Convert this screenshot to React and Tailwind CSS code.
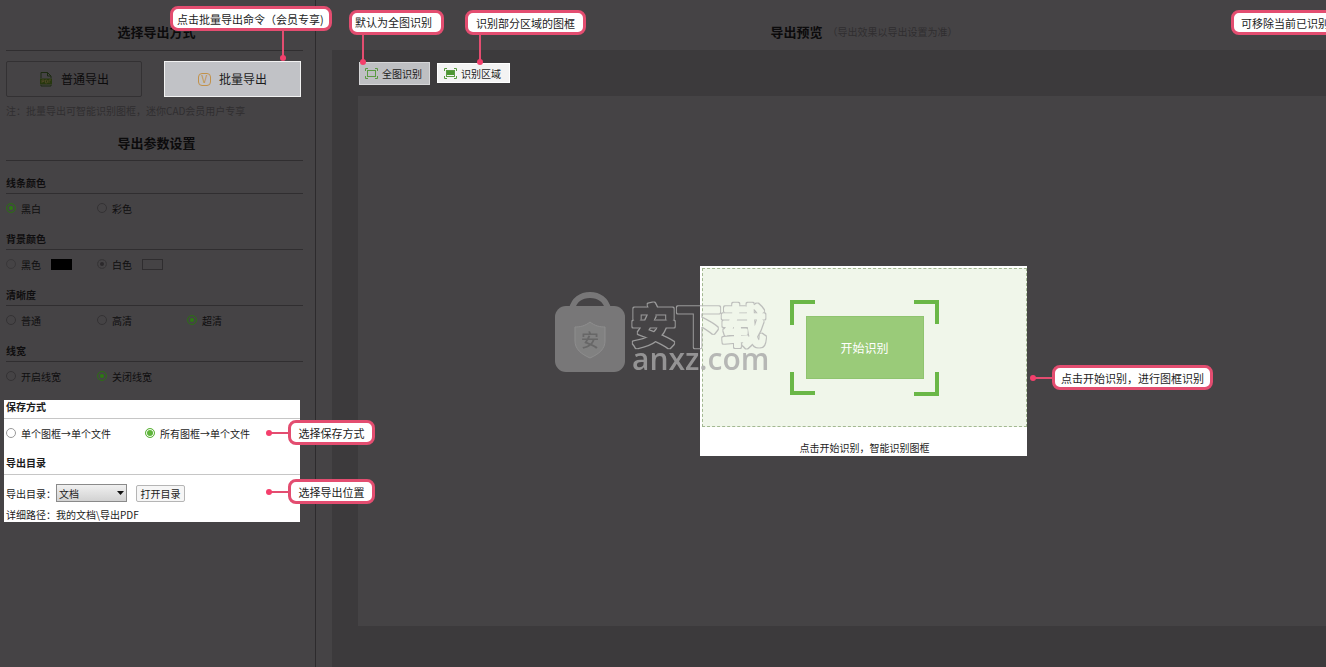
import React, { useState } from "react";
import clsx from "clsx";

const SETTINGS = [
  {
    name: "lineColor",
    title: "线条颜色",
    value: "黑白",
    options: [{ label: "黑白" }, { label: "彩色" }],
  },
  {
    name: "background",
    title: "背景颜色",
    value: "白色",
    muted: true,
    options: [
      { label: "黑色", swatch: "bg-black border-black" },
      { label: "白色", swatch: "border-[#2f2d2f]" },
    ],
  },
  {
    name: "quality",
    title: "清晰度",
    value: "超清",
    options: [{ label: "普通" }, { label: "高清" }, { label: "超清" }],
  },
  {
    name: "lineWidth",
    title: "线宽",
    value: "关闭线宽",
    options: [{ label: "开启线宽" }, { label: "关闭线宽" }],
  },
];

const Radio = ({ name, label, checked, onChange, tone, swatch }) => (
  <label className="flex items-center whitespace-nowrap">
    <input
      type="radio"
      name={name}
      checked={checked}
      onChange={onChange}
      className={clsx(
        "appearance-none w-[10px] h-[10px] rounded-full border mr-[5px]",
        tone === "light" &&
          "border-[#9a9a9a] checked:border-[#5fb53c] checked:bg-[#5fb53c] checked:shadow-[inset_0_0_0_1px_white]",
        tone === "dark" &&
          "border-[#343234] checked:border-[#2f6a1a] checked:bg-[#2d7a12] checked:shadow-[inset_0_0_0_2px_#454345]",
        tone === "muted" &&
          "border-[#393739] checked:bg-[#2b292b] checked:shadow-[inset_0_0_0_2px_#454345]"
      )}
    />
    {label}
    {swatch && (
      <span className={clsx("ml-[10px] w-[21px] h-[11px] border", swatch)} />
    )}
  </label>
);

// Bubble with a line and a dot that points at a control
const Callout = ({ children, className, pointer = "left", stem = "" }) => (
  <div
    className={clsx(
      "absolute z-10 h-[25px] flex items-center rounded-lg border-[3px] border-[#e34d70] bg-white text-[11px] leading-4 text-[#1c1c1c] whitespace-nowrap",
      className
    )}
  >
    {children}
    {pointer === "down" && (
      <span className={clsx("absolute top-full w-[2px] bg-[#e34d70]", stem)}>
        <span className="absolute -bottom-[3px] -left-[2px] w-[6px] h-[6px] rounded-full bg-[#f43f6c]" />
      </span>
    )}
    {pointer === "left" && (
      <span className="absolute right-full top-[9px] w-[22px] h-[2px] bg-[#e34d70]">
        <span className="absolute -top-[2px] -left-[3px] w-[6px] h-[6px] rounded-full bg-[#f43f6c]" />
      </span>
    )}
  </div>
);

const FileIcon = () => (
  <svg width="14" height="16" viewBox="0 0 14 16" fill="none">
    <path d="M2 7V1.500h6.500L12 5v2" stroke="#1d2b12" />
    <path d="M8.500 1.500V5H12" stroke="#1d2b12" />
    <path d="M1 7.500h12v6H1z" fill="#27370f" />
    <path d="M3 12V9h2v1.500H3M6.500 9v3H8l.5-1V9.500L8 9zM10 12V9h2" stroke="#4b4724" />
    <path d="M2 14v1h10v-1" stroke="#1d2b12" />
  </svg>
);

const ScanIcon = ({ filled }) => (
  <svg width="13" height="11" viewBox="0 0 13 11" fill="none" stroke="#5b9b42">
    <path d="M.5 3V.5H3M10 .5h2.500V3M12.500 8v2.500H10M3 10.500H.5V8" />
    <rect x="2.500" y="2.500" width="8" height="6" />
    {filled && <path d="M3 3h7v4H3z" fill="#4c9632" stroke="none" />}
  </svg>
);

const Corners = () => (
  <svg
    className="col-start-1 row-start-1"
    width="149"
    height="96"
    viewBox="0 0 149 96"
    fill="none"
    stroke="#6ab747"
    strokeWidth="4"
  >
    <path d="M2 25V2H25M124 2H147V24M147 72V94H124M25 93H2V72" />
  </svg>
);

const Watermark = () => (
  <div className="absolute right-[256px] top-[25px] flex pointer-events-none opacity-80">
    <svg width="72" height="92" viewBox="0 0 72 92">
      <path
        d="M18 18C20 9 27 4 36 4s16 5 18 14"
        fill="none"
        stroke="#858585"
        strokeWidth="6"
      />
      <rect x="1" y="15" width="70" height="66" rx="11" fill="#858585" />
      <path
        d="M36 31c5 4 10 5 15 5v14c0 8-6 13-15 17-9-4-15-9-15-17V36c5 0 10-1 15-5z"
        fill="#919191"
        stroke="#a0a0a0"
      />
      <text
        x="36"
        y="56"
        textAnchor="middle"
        fontSize="18"
        fontWeight="500"
        fill="#707070"
        fontFamily="Noto Sans CJK SC, sans-serif"
      >
        安
      </text>
    </svg>
    <svg width="145" height="92" viewBox="0 0 145 92">
      <filter id="outline">
        <feMorphology in="SourceAlpha" operator="dilate" radius="1" result="thick" />
        <feFlood floodColor="#b0b0b0" />
        <feComposite in2="thick" operator="in" />
        <feComposite in2="SourceAlpha" operator="out" />
      </filter>
      <text
        x="5"
        y="52"
        fontFamily="Noto Sans CJK SC, sans-serif"
        fontWeight="500"
        fontSize="45"
        stroke="black"
        strokeWidth="3"
        strokeLinejoin="round"
        filter="url(#outline)"
      >
        安下载
      </text>
      <text
        x="6"
        y="79"
        fontFamily="Open Sans, sans-serif"
        fontWeight="600"
        fontSize="30"
        fill="#a8a8a8"
      >
        anxz.com
      </text>
    </svg>
  </div>
);

const Sidebar = () => {
  const [values, setValues] = useState(
    Object.fromEntries(SETTINGS.map((s) => [s.name, s.value]))
  );
  const [saveMode, setSaveMode] = useState("all");

  return (
    <aside className="w-[316px] shrink-0 border-r border-[#2d2b2d] pl-[4px] pr-[12px]">
      <h2 className="ml-[2px] h-[51px] pt-[13px] pl-[4px] text-center text-[13px] leading-[38px] font-bold text-[#0c0b0c] border-b border-[#302e30]">
        选择导出方式
      </h2>

      <div className="relative flex justify-between pt-[10px] pl-[2px] pr-[2px]">
        <button className="w-[136px] h-[36px] flex items-center justify-center gap-[8px] border border-[#333133] rounded-xs text-[12px] text-[#0c0b0c]">
          <FileIcon />
          普通导出
        </button>
        <button className="w-[137px] h-[36px] flex items-center justify-center gap-[8px] border border-[#f2f2f2] bg-[#c1c2c6] text-[12px] text-[#1c1c1c]">
          <span className="w-[13px] h-[13px] flex items-center justify-center rounded border border-[#c2914a] text-[10px] leading-none text-[#c2914a]">
            V
          </span>
          批量导出
        </button>
        <Callout
          pointer="down"
          stem="h-[30px] right-[45px]"
          className="-right-[29px] -top-[45px] w-[162px] pl-[4px]"
        >
          点击批量导出命令（会员专享)
        </Callout>
      </div>

      <p className="h-[29px] pl-[2px] text-[10px] leading-[28px] text-[#302e30]">
        注：批量导出可智能识别图框，迷你CAD会员用户专享
      </p>

      <h2 className="ml-[2px] h-[35px] pl-[4px] text-center text-[13px] leading-[34px] font-bold text-[#0c0b0c] border-b border-[#302e30]">
        导出参数设置
      </h2>

      <div className="pt-[13px] pl-[2px] text-[10px] text-[#0f0e0f]">
        {SETTINGS.map((setting) => (
          <fieldset key={setting.name} className="h-[56px]">
            <legend className="w-full h-[20px] leading-[18px] font-bold border-b border-[#302e30]">
              {setting.title}
            </legend>
            <div className="grid grid-cols-[91px_90px_1fr] h-[28px]">
              {setting.options.map((option) => (
                <Radio
                  key={option.label}
                  name={setting.name}
                  label={option.label}
                  swatch={option.swatch}
                  tone={setting.muted ? "muted" : "dark"}
                  checked={values[setting.name] === option.label}
                  onChange={() =>
                    setValues({ ...values, [setting.name]: option.label })
                  }
                />
              ))}
            </div>
          </fieldset>
        ))}
      </div>

      <div className="relative mt-[2px] w-[296px] h-[122px] bg-white text-[10px] text-[#1c1c1c]">
        <fieldset className="h-[54px]">
          <legend className="w-full h-[19px] pl-[2px] leading-[13px] font-bold border-b border-[#c6c6c6]">
            保存方式
          </legend>
          <div className="grid grid-cols-[139px_1fr] h-[28px] pl-[2px]">
            <Radio
              name="saveMode"
              label="单个图框→单个文件"
              tone="light"
              checked={saveMode === "single"}
              onChange={() => setSaveMode("single")}
            />
            <Radio
              name="saveMode"
              label="所有图框→单个文件"
              tone="light"
              checked={saveMode === "all"}
              onChange={() => setSaveMode("all")}
            />
          </div>
        </fieldset>
        <h3 className="h-[21px] pl-[2px] leading-[18px] font-bold border-b border-[#c6c6c6]">
          导出目录
        </h3>
        <div className="flex items-center h-[36px] pl-[2px]">
          <label htmlFor="folder" className="w-[50px] whitespace-nowrap">
            导出目录：
          </label>
          <div className="relative">
            <select
              id="folder"
              className="appearance-none block w-[71px] h-[18px] pl-[2px] border border-[#8a8a8a] bg-linear-to-b from-[#f0f0f0] to-[#d2d2d2]"
            >
              <option>文档</option>
            </select>
            <svg
              className="absolute right-[3px] top-[7px] pointer-events-none"
              width="7"
              height="4"
              viewBox="0 0 7 4"
            >
              <path d="M0 0h7L3.500 4z" fill="#111" />
            </svg>
          </div>
          <button className="ml-[9px] w-[49px] h-[17px] border border-[#b5b5b5] rounded-xs bg-[#f6f6f6]">
            打开目录
          </button>
        </div>
        <p className="pl-[2px] leading-[8px]">详细路径：我的文档\导出PDF</p>
        <Callout className="left-[284px] top-[20px] w-[87px] justify-center">
          选择保存方式
        </Callout>
        <Callout className="left-[284px] top-[79px] w-[87px] justify-center">
          选择导出位置
        </Callout>
      </div>
    </aside>
  );
};

const Preview = () => {
  const [area, setArea] = useState("full");

  return (
    <main className="relative flex-1 min-w-0 flex flex-col pl-4">
      <header className="h-[50px] pt-[14px] pl-[70px] flex items-center justify-center gap-[5px] leading-[34px]">
        <h2 className="text-[13px] font-bold text-[#0c0b0c]">导出预览</h2>
        <span className="text-[10px] text-[#302e30]">
          （导出效果以导出设置为准）
        </span>
      </header>

      <section className="flex-1 flex flex-col bg-[#3c3a3c] pl-[26px] pb-[41px]">
        <div className="flex items-center gap-[7px] h-[46px] pl-px">
          <div className="relative">
            <button
              onClick={() => setArea("full")}
              aria-pressed={area === "full"}
              className="w-[71px] h-[23px] flex items-center justify-center gap-[4px] pr-[2px] border border-[#d6d6d8] bg-[#bebfc2] text-[10px] text-[#1c1c1c] whitespace-nowrap"
            >
              <ScanIcon />
              全图识别
            </button>
            <Callout
              pointer="down"
              stem="h-[30px] left-[10px]"
              className="-left-[10px] -top-[52px] w-[95px] pl-[3px]"
            >
              默认为全图识别
            </Callout>
          </div>
          <div className="relative">
            <button
              onClick={() => setArea("part")}
              aria-pressed={area === "part"}
              className="w-[73px] h-[20px] flex items-center justify-center gap-[4px] pr-[2px] border border-white bg-[#f3f3f3] text-[10px] text-[#1c1c1c] whitespace-nowrap"
            >
              <ScanIcon filled />
              识别区域
            </button>
            <Callout
              pointer="down"
              stem="h-[30px] left-[11px]"
              className="left-[28px] -top-[53px] w-[121px] pl-[8px]"
            >
              识别部分区域的图框
            </Callout>
          </div>
        </div>

        <div className="flex-1 flex items-center justify-center pl-[43px] bg-[#454345]">
          <div className="relative w-[327px] bg-white pt-[2px] pl-[2px]">
            <div className="h-[159px] grid place-items-center border border-dashed border-[#a3b891] bg-[#f0f6ea]">
              <Corners />
              <button className="col-start-1 row-start-1 w-[118px] h-[63px] border border-[#8fc46f] bg-[#9acb79] text-[12px] text-white">
                开始识别
              </button>
            </div>
            <p className="h-[29px] pt-[14px] text-center text-[10px] leading-[14px] text-[#1c1c1c]">
              点击开始识别，智能识别图框
            </p>
            <Watermark />
            <Callout className="left-[352px] top-[99px] w-[161px] pl-[6px]">
              点击开始识别，进行图框识别
            </Callout>
          </div>
        </div>
      </section>

      <Callout pointer="none" className="-right-[60px] top-[10px] w-[155px] pl-[7px]">
        可移除当前已识别的图框
      </Callout>
    </main>
  );
};

const App = () => (
  <div className="flex min-h-screen overflow-hidden bg-[#454345] font-['Noto_Sans_CJK_SC','Liberation_Sans',sans-serif]">
    <Sidebar />
    <Preview />
  </div>
);

export default App;
